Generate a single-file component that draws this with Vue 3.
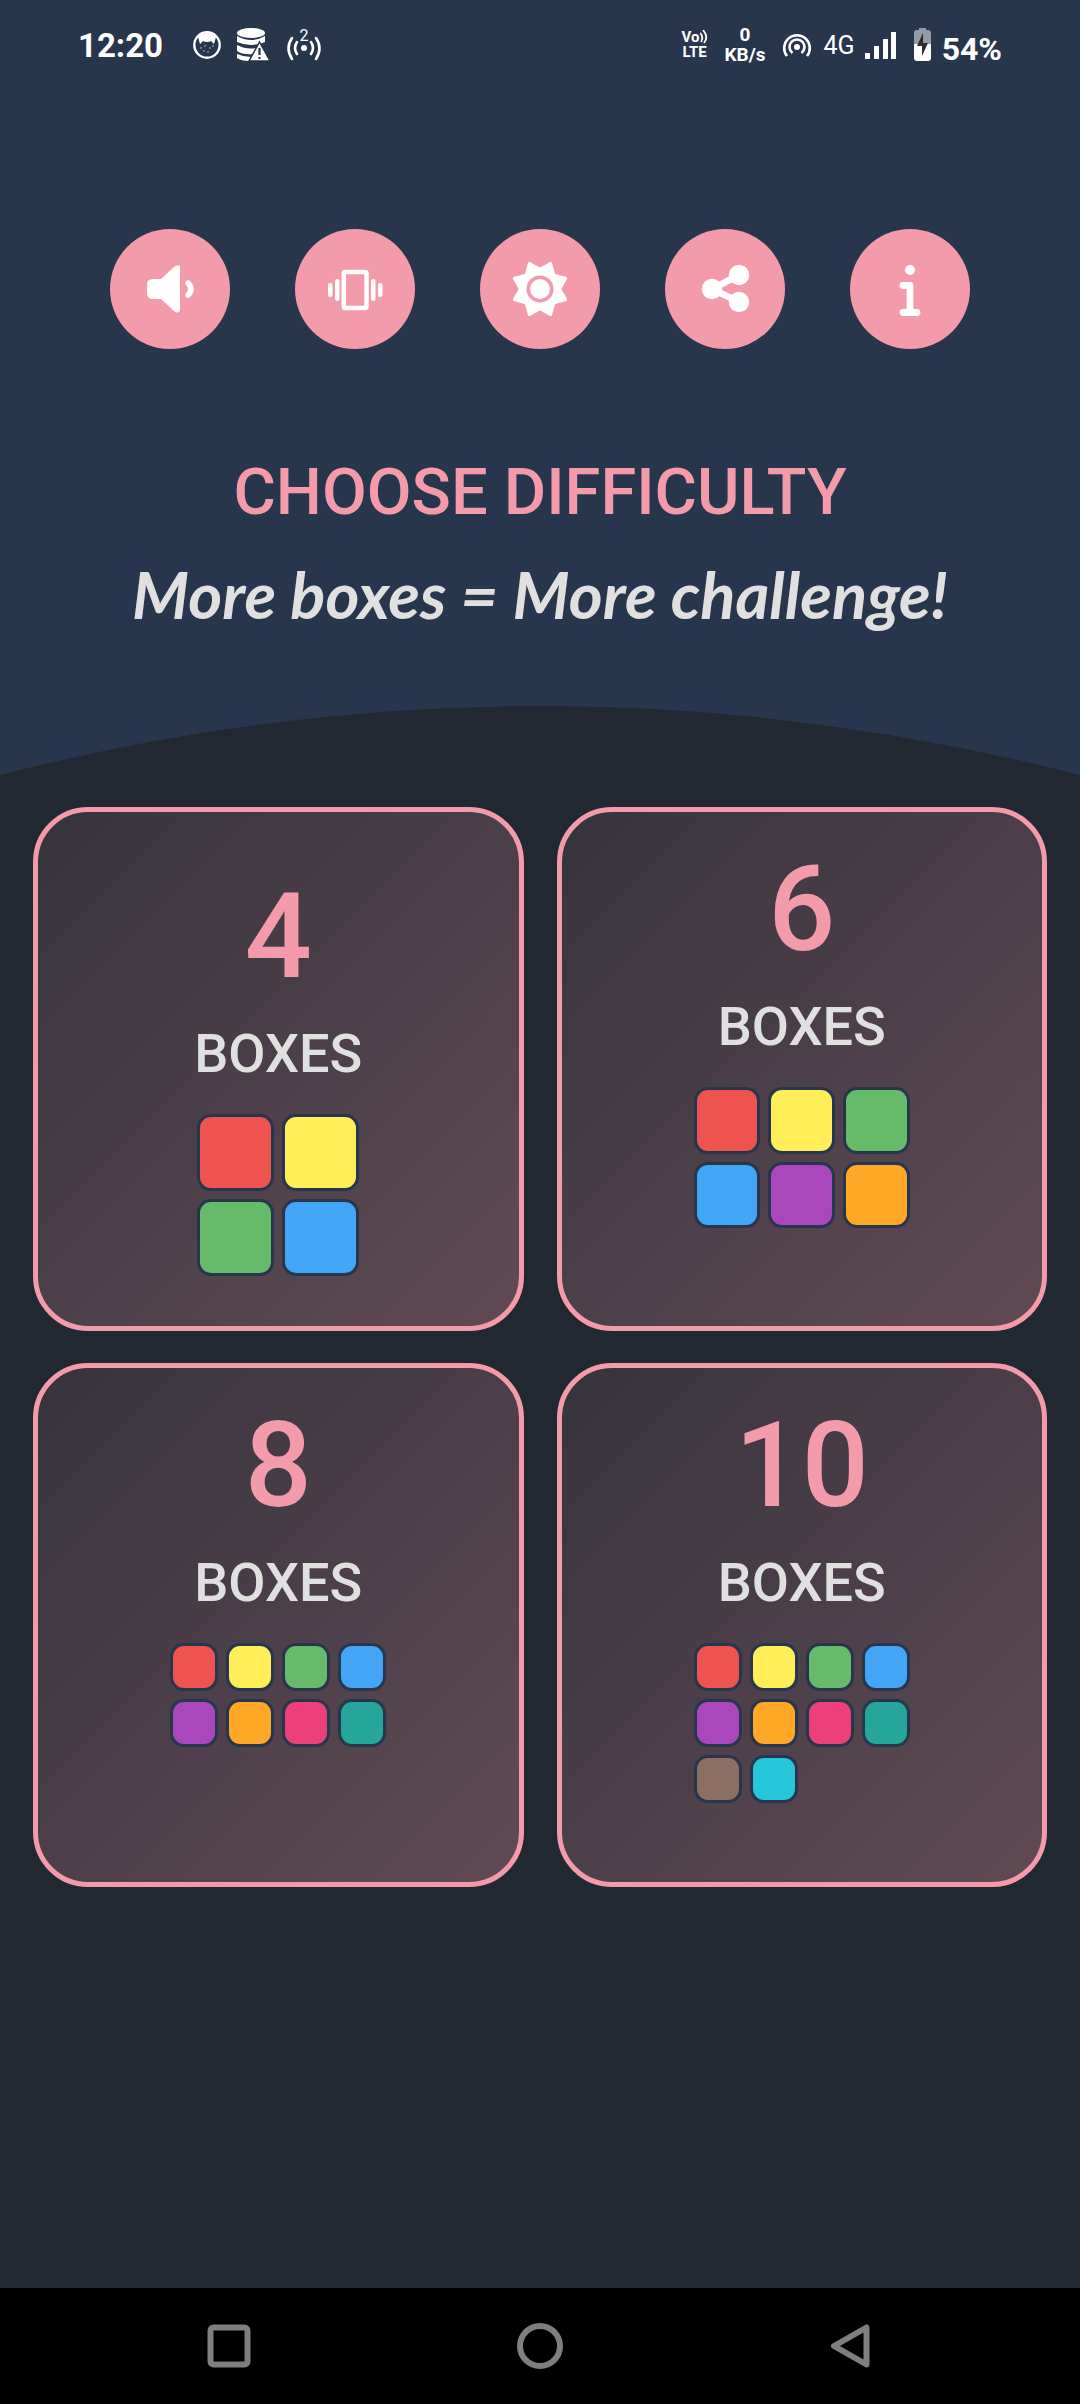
<script setup>
const palette = ['#ef5350', '#ffee58', '#66bb6a', '#42a5f5', '#ab47bc', '#ffa726', '#ec407a', '#26a69a', '#8d6e63', '#26c6da']

const levels = [
  { count: 4, layout: 'two' },
  { count: 6, layout: 'three' },
  { count: 8, layout: 'four' },
  { count: 10, layout: 'four' },
]
const colours = (n) => palette.slice(0, n)

const sunPoints = Array.from({ length: 16 }, (_, i) => {
  const r = i % 2 ? 28 : 20
  const a = (i * Math.PI) / 8
  return `${(60 + r * Math.cos(a)).toFixed(1)},${(60 + r * Math.sin(a)).toFixed(1)}`
}).join(' ')
</script>

<template>
  <div class="screen">
    <div class="hero">
      <div class="status">
        <div class="group left">
          <span class="clock">12:20</span>
          <svg width="28" height="28" viewBox="0 0 28 28">
            <circle cx="14" cy="14" r="12.7" fill="none" stroke="#fff" stroke-width="2.4" />
            <path d="M5 6Q14-2 23 6L21 13 18 10Q14 12 10 10L7 13Z" fill="#fff" />
            <g fill="#fff" opacity=".7">
              <circle cx="8" cy="17" r=".8" /><circle cx="12" cy="15" r=".8" /><circle cx="17" cy="17" r=".8" />
              <circle cx="20" cy="15" r=".8" /><circle cx="11" cy="20" r=".8" /><circle cx="15" cy="21" r=".8" />
            </g>
          </svg>
          <svg width="34" height="34" viewBox="0 0 34 34">
            <g fill="#fff">
              <ellipse cx="14" cy="5" rx="14" ry="5" />
              <path d="M0 8Q14 16 28 8V14Q14 20 0 14Z" />
              <path d="M0 17Q10 22 19 20L16 26Q6 27 0 23Z" />
              <path d="M0 26Q7 29 14 29L12 33Q4 33 0 30Z" />
              <path d="M22.500 14L33 33H12Z" stroke="#27364d" stroke-width="1.500" />
            </g>
            <path d="M22.500 20V27M22.500 29V31" stroke="#27364d" stroke-width="2.200" />
          </svg>
          <svg width="34" height="44" viewBox="0 -5 34 44">
            <circle cx="17" cy="20" r="3" fill="#fff" />
            <g fill="none" stroke="#fff" stroke-width="2.600" stroke-linecap="round">
              <path d="M10 14Q6 20 10 26M5 10Q-2 20 5 31M24 14Q28 20 24 26M29 10Q36 20 29 31" />
            </g>
            <text x="17" y="13" text-anchor="middle" font-size="16" fill="#fff">2</text>
          </svg>
        </div>
        <div class="group right">
          <div class="volte">
            <span class="vo">Vo<svg width="8" height="14" viewBox="0 0 8 14" fill="none" stroke="#fff" stroke-width="1.800">
              <path d="M0 3Q4 7 1 12M3 0Q9 7 4 13" />
            </svg></span>
            <span>LTE</span>
          </div>
          <div class="rate"><span>0</span><span>KB/s</span></div>
          <svg width="30" height="30" viewBox="0 0 30 30">
            <circle cx="15" cy="17" r="3" fill="#fff" />
            <g fill="none" stroke="#fff" stroke-width="2.600">
              <path d="M10.500 23A7.500 7.500 0 1 1 19.500 23" />
              <path d="M5 26A12.800 12.800 0 1 1 25 26" />
            </g>
          </svg>
          <span class="net">4G</span>
          <svg width="32" height="30" viewBox="0 0 32 30">
            <path d="M0 23H5V29H0ZM9 16H14V29H9ZM18 9H23V29H18ZM26 2H31V29H26Z" fill="#fff" />
          </svg>
          <svg class="battery" width="18" height="34" viewBox="0 0 18 34">
            <path d="M5 0H12V2H14Q17 2 17 5V16H0V5Q0 2 3 2H5Z" fill="#939baa" />
            <path d="M0 16H17V30Q17 33 14 33H3Q0 33 0 30Z" fill="#fff" />
            <path d="M9 5V15H14L8 28V18H3Z" fill="#2b2b2b" />
          </svg>
          <span class="percent">54%</span>
        </div>
      </div>

      <div class="actions">
        <button aria-label="Sound">
          <svg viewBox="0 0 120 120" fill="#fff">
            <path d="M43 50H51L64 38Q67 35 70 37V82Q67 85 64 82L51 70H43Q37 70 37 64V56Q37 50 43 50Z" />
            <path d="M78 54Q84 60 78 66" fill="none" stroke="#fff" stroke-width="5.500" stroke-linecap="round" />
          </svg>
        </button>
        <button aria-label="Vibration">
          <svg viewBox="0 0 120 120" fill="#fff">
            <rect x="48.800" y="43" width="22.700" height="36" rx="1.500" fill="none" stroke="#fff" stroke-width="4.500" />
            <rect x="40" y="50" width="4.500" height="22" rx="2.200" />
            <rect x="33" y="54" width="4.500" height="14" rx="2.200" />
            <rect x="76" y="50" width="4.500" height="22" rx="2.200" />
            <rect x="83" y="54" width="4.500" height="14" rx="2.200" />
          </svg>
        </button>
        <button aria-label="Theme">
          <svg viewBox="0 0 120 120" fill="#fff">
            <polygon :points="sunPoints" stroke="#fff" stroke-width="2.500" stroke-linejoin="round" />
            <circle cx="60" cy="60" r="11.800" stroke="#f49bab" stroke-width="3.600" />
          </svg>
        </button>
        <button aria-label="Share">
          <svg viewBox="0 0 120 120" fill="#fff">
            <path d="M74 46L47 60L74 73" fill="none" stroke="#fff" stroke-width="6.500" />
            <circle cx="47" cy="60" r="10.200" /><circle cx="74" cy="46" r="10.200" /><circle cx="74" cy="73" r="10.200" />
          </svg>
        </button>
        <button aria-label="Info">
          <svg viewBox="0 0 120 120">
            <circle cx="60" cy="41" r="5" fill="#fff" />
            <path d="M53 56.500H60V83.500M53 83.500H67" fill="none" stroke="#fff" stroke-width="6.800" stroke-linecap="round" stroke-linejoin="round" />
          </svg>
        </button>
      </div>

      <h1>CHOOSE DIFFICULTY</h1>
      <p class="tagline">More boxes = More challenge!</p>
      <svg class="curve" viewBox="0 0 1080 69" preserveAspectRatio="none">
        <path d="M0 69Q540-69 1080 69Z" fill="#212831" />
      </svg>
    </div>

    <main class="levels">
      <button v-for="level in levels" :key="level.count" class="card">
        <span class="count">{{ level.count }}</span>
        <span class="label">BOXES</span>
        <span class="swatches" :class="level.layout">
          <span v-for="c in colours(level.count)" :key="c" class="swatch" :style="{ background: c }"></span>
        </span>
      </button>
    </main>

    <nav class="navbar">
      <button aria-label="Recent apps">
        <svg width="46" height="46" viewBox="0 0 46 46"><rect x="4.500" y="4.500" width="37" height="37" rx="3" /></svg>
      </button>
      <button aria-label="Home">
        <svg width="46" height="46" viewBox="0 0 46 46"><circle cx="23" cy="23" r="20" /></svg>
      </button>
      <button aria-label="Back">
        <svg width="46" height="46" viewBox="0 0 46 46"><path d="M38.500 4.500V41.500L6 23Z" /></svg>
      </button>
    </nav>
  </div>
</template>

<style>
body {
  margin: 0;
  background: #212831;
}
</style>

<style scoped>
.screen {
  display: flex;
  flex-direction: column;
  min-height: 100vh;
  background: #212831;
  color: #fff;
  font-family: Roboto, "Noto Sans", sans-serif;
}
button {
  padding: 0;
  border: 0;
  background: none;
  color: inherit;
  font: inherit;
  cursor: pointer;
}
svg {
  display: block;
}
.hero {
  display: flex;
  flex-direction: column;
  background: #27364d;
}
.status {
  display: flex;
  justify-content: space-between;
  align-items: center;
  height: 90px;
  padding: 0 78px;
}
.group {
  display: flex;
  align-items: center;
}
.left {
  gap: 16px;
}
.clock {
  margin-right: 14px;
  font-size: 33px;
  font-weight: 700;
}
.volte,
.rate {
  display: flex;
  flex-direction: column;
  align-items: center;
  font-weight: 700;
}
.volte {
  font-size: 15px;
  line-height: 15px;
}
.vo {
  display: flex;
}
.rate {
  margin: 0 16px 0 17px;
  font-size: 19px;
  line-height: 20px;
}
.net {
  margin: 0 10px 0 12px;
  font-size: 25px;
}
.battery {
  margin: 0 10px 0 17px;
}
.percent {
  padding-top: 8px;
  font-size: 32px;
  font-weight: 700;
}
.actions {
  display: flex;
  justify-content: center;
  gap: 65px;
  padding-top: 139px;
}
.actions button {
  width: 120px;
  height: 120px;
  border-radius: 50%;
  background: #f49bab;
}
h1 {
  margin: 101px 0 0;
  color: #f49bab;
  font-size: 65px;
  font-weight: 500;
  line-height: 84px;
  text-align: center;
}
.tagline {
  margin: 20px 0 72px;
  color: #e0e0e0;
  font-family: Lato, "Noto Sans", sans-serif;
  font-size: 65px;
  font-style: italic;
  font-weight: 700;
  line-height: 80px;
  text-align: center;
}
.curve {
  width: 100%;
  height: 69px;
}
.levels {
  display: grid;
  grid-template-columns: 1fr 1fr;
  gap: 32px 33px;
  padding: 32px 33px;
}
.card {
  display: flex;
  flex-direction: column;
  align-items: center;
  justify-content: center;
  min-height: 524px;
  padding: 22px;
  box-sizing: border-box;
  border: 5px solid #f49bab;
  border-radius: 55px;
  background: linear-gradient(135deg, #36333d, #614b55) border-box;
}
.count {
  color: #f49bab;
  font-size: 118px;
  font-weight: 500;
  line-height: 150px;
}
.label {
  margin-bottom: 18px;
  color: #e0e0e0;
  font-size: 54px;
  font-weight: 500;
  line-height: 84px;
}
.swatches {
  display: grid;
  align-content: start;
  gap: 8px;
  width: 216px;
  height: 216px;
}
.two {
  grid-template-columns: repeat(2, 1fr);
  width: 162px;
  height: 162px;
}
.three {
  grid-template-columns: repeat(3, 1fr);
}
.four {
  grid-template-columns: repeat(4, 1fr);
}
.swatch {
  aspect-ratio: 1;
  box-sizing: border-box;
  border: 3px solid #27364d;
  border-radius: 14px;
}
.navbar {
  display: grid;
  grid-template-columns: repeat(3, 1fr);
  height: 116px;
  margin-top: auto;
  padding: 0 73px;
  background: #000;
}
.navbar button {
  display: flex;
  align-items: center;
  justify-content: center;
}
.navbar svg {
  fill: none;
  stroke: #7f7f7f;
  stroke-width: 6px;
  stroke-linejoin: round;
}
</style>
